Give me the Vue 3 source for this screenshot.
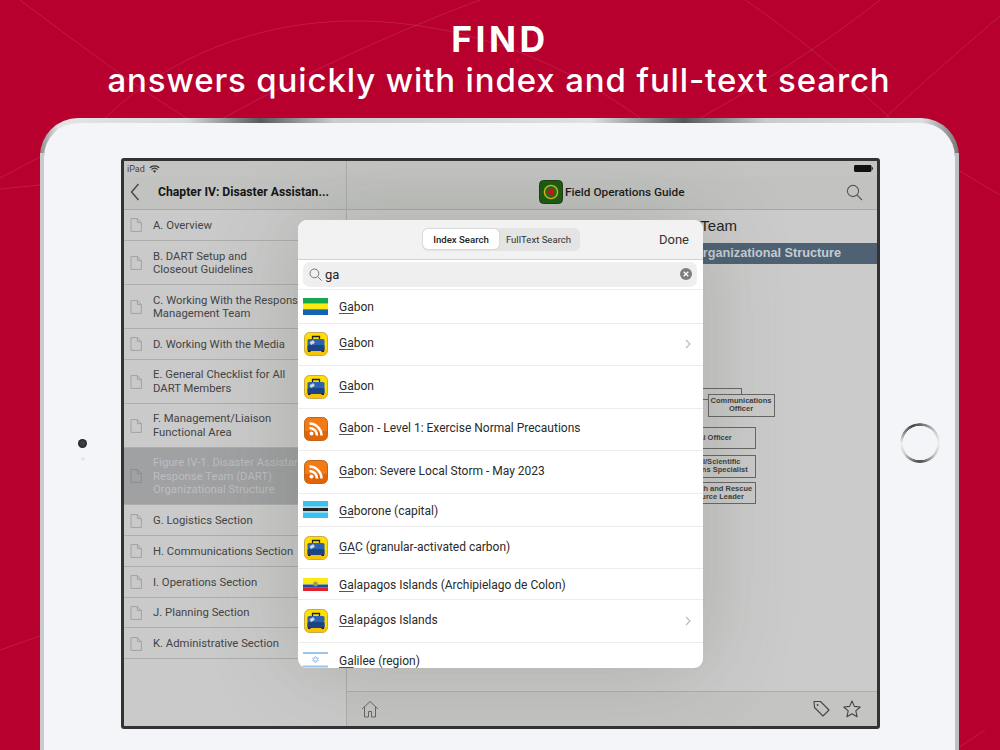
<template>
  <div class="page">
    <svg class="bg-lines" width="1000" height="750" viewBox="0 0 1000 750" fill="none">
      <path d="M20 0C80 45 140 90 190 120" />
      <path d="M105 118C170 55 260 22 350 21C460 20 560 60 640 118" />
      <path d="M480 0C400 30 310 70 220 120" />
      <path d="M0 178L40 157" />
      <path d="M0 189L40 185" />
      <path d="M745 0C790 30 850 80 890 118" />
      <path d="M880 0C830 40 760 85 700 118" />
      <path d="M1000 16C960 50 920 85 885 118" />
      <path d="M958 170L1000 195" />
      <path d="M0 650L40 636" />
      <path d="M958 748L985 730" />
    </svg>

    <header class="headline">
      <h1>FIND</h1>
      <p>answers quickly with index and full-text search</p>
    </header>

    <div class="ipad">
      <div class="ipad-inner">
        <div class="bezel-left">
          <span class="camera"></span>
          <span class="sensor"></span>
        </div>

        <div class="screen">
          <aside class="side-col">
            <div class="statusbar">
              <span>iPad</span>
              <svg width="11" height="8" viewBox="0 0 11 8" fill="none" stroke="#333" stroke-width="1.2">
                <path d="M.8 2.8a6.8 6.8 0 0 1 9.4 0M2.5 4.6a4.4 4.4 0 0 1 6 0" />
                <path d="M5.5 7.8 3.9 6a2.3 2.3 0 0 1 3.2 0z" fill="#333" stroke="none" />
              </svg>
            </div>
            <div class="navbar side-nav">
              <svg width="10" height="18" viewBox="0 0 10 18" fill="none" stroke="#444" stroke-width="1.4">
                <path d="M8.5 1 1.5 9l7 8" />
              </svg>
              <span class="chapter-title">Chapter IV: Disaster Assistan...</span>
            </div>
            <ul class="chapters">
              <li v-for="item in chapters" :key="item.lines[0]"
                  :class="['chapter', 'lines-' + item.lines.length, { current: item.current }]">
                <svg class="doc-icon" width="12" height="14" viewBox="0 0 12 14" fill="none">
                  <path d="M1 .6h6.4L11.4 4.6v8.8H1zM7.4.6v4h4" />
                </svg>
                <div class="chapter-text">
                  <div v-for="line in item.lines" :key="line">{{ line }}</div>
                </div>
              </li>
            </ul>
          </aside>

          <section class="main-col">
            <div class="statusbar status-right">
              <svg width="19" height="7" viewBox="0 0 19 7">
                <rect x="0" y="0" width="17.5" height="7" rx="1.4" fill="#111" />
                <rect x="17.8" y="2.3" width="1.2" height="2.4" fill="#333" />
              </svg>
            </div>
            <div class="navbar main-nav">
              <span class="app-badge">
                <svg width="24" height="24" viewBox="0 0 24 24">
                  <rect x=".5" y=".5" width="23" height="23" rx="4" fill="#1d5a10" stroke="#1c3d12" />
                  <circle cx="12" cy="12" r="6.6" fill="#2a6a16" stroke="#c6c21c" stroke-width="1.4" />
                  <path d="M6.8 12 15 7.6v8.8z" fill="#cf1020" />
                </svg>
              </span>
              <span class="app-title">Field Operations Guide</span>
              <svg class="main-search" width="17" height="17" viewBox="0 0 17 17" fill="none" stroke="#555" stroke-width="1.1">
                <circle cx="7" cy="7" r="5.6" />
                <path d="m11 11 5 5" />
              </svg>
            </div>

            <div class="doc">
              <div class="doc-title">Team</div>
              <div class="doc-bar">Organizational Structure</div>
              <div class="org">
                <div class="org-box box-back"></div>
                <div class="org-box box-comm">Communications<br />Officer</div>
                <div class="org-box box-medical">Medical Officer</div>
                <div class="org-box box-tech">Technical/Scientific<br />Operations Specialist</div>
                <div class="org-box box-search">Search and Rescue<br />Resource Leader</div>
              </div>
            </div>

            <div class="toolbar">
              <svg width="18" height="18" viewBox="0 0 18 18" fill="none" stroke="#666" stroke-width="1">
                <path d="M1 9 9 1.5 17 9M3.5 7v10h4v-5.500h3V17h4V7" />
              </svg>
              <span class="toolbar-gap"></span>
              <svg width="17" height="17" viewBox="0 0 17 17" fill="none" stroke="#444" stroke-width="1.1">
                <path d="M1 1.500h6.500l8.500 8.500-6 6-8.500-8.500z" stroke-linejoin="round" />
                <circle cx="4.600" cy="5" r=".9" fill="#444" stroke="none" />
              </svg>
              <svg width="18" height="18" viewBox="0 0 18 18" fill="none" stroke="#444" stroke-width="1.1">
                <path d="m9 1 2.400 5.400 5.800.6-4.400 3.900 1.300 5.800L9 13.700l-5.100 3 1.300-5.800L.8 7l5.800-.6z" stroke-linejoin="round" />
              </svg>
            </div>
          </section>

          <div class="search-modal">
            <div class="modal-head">
              <div class="segmented">
                <span class="seg active">Index Search</span>
                <span class="seg">FullText Search</span>
              </div>
              <span class="done">Done</span>
            </div>

            <div class="search-zone">
              <div class="search-field">
                <svg width="13" height="13" viewBox="0 0 13 13" fill="none" stroke="#777" stroke-width="1">
                  <circle cx="5.400" cy="5.400" r="4.400" />
                  <path d="m8.600 8.600 4 4" />
                </svg>
                <span class="query">ga</span>
                <span class="clear">
                  <svg width="6" height="6" viewBox="0 0 6 6" stroke="#fff" stroke-width="1.300">
                    <path d="m.7.7 4.600 4.600M5.300.7.700 5.300" />
                  </svg>
                </span>
              </div>
            </div>

            <ul class="results">
              <li v-for="(row, i) in results" :key="i" :class="['result', row.size]">
                <svg v-if="row.icon === 'gabon'" class="flag" width="25" height="17" viewBox="0 0 25 17">
                  <rect width="25" height="5.700" fill="#16a84a" />
                  <rect y="5.700" width="25" height="5.700" fill="#fcea10" />
                  <rect y="11.300" width="25" height="5.700" fill="#1464b0" />
                </svg>
                <svg v-else-if="row.icon === 'botswana'" class="flag" width="25" height="17" viewBox="0 0 25 17">
                  <rect width="25" height="17" fill="#3cc0ee" />
                  <rect y="5.600" width="25" height="5.800" fill="#fff" />
                  <rect y="6.800" width="25" height="3.400" fill="#222" />
                </svg>
                <svg v-else-if="row.icon === 'ecuador'" class="flag" width="25" height="13" viewBox="0 0 25 13">
                  <rect width="25" height="6.500" fill="#fde910" />
                  <rect y="6.500" width="25" height="3.200" fill="#1a4fa8" />
                  <rect y="9.700" width="25" height="3.300" fill="#e0202c" />
                  <circle cx="12.500" cy="6" r="2.400" fill="#a89a50" />
                </svg>
                <svg v-else-if="row.icon === 'israel'" class="flag" width="25" height="17" viewBox="0 0 25 17">
                  <rect width="25" height="17" fill="#fff" />
                  <rect width="25" height="2" y="0" fill="#9cc3ea" />
                  <rect width="25" height="2" y="13.500" fill="#9cc3ea" />
                  <path d="m12.500 4 3 5h-6zM12.500 11l3-5h-6z" fill="none" stroke="#9cc3ea" stroke-width=".8" />
                </svg>
                <svg v-else-if="row.icon === 'case'" class="app-icon" width="24" height="24" viewBox="0 0 24 24">
                  <rect x=".5" y=".5" width="23" height="23" rx="5" fill="#ffdf00" stroke="#c8a84e" />
                  <path d="M1 18h22v1a4 4 0 0 1-4 4H5a4 4 0 0 1-4-4z" fill="#f6c400" />
                  <path d="M8.500 7V4.500h7V7" fill="none" stroke="#222" stroke-width="1.300" />
                  <rect x="3.500" y="7" width="17" height="12" rx="1.500" fill="#2c62b0" />
                  <rect x="3.500" y="13" width="17" height="6" rx="1.500" fill="#1c4384" />
                  <rect x="4" y="18.500" width="2.500" height="1.500" fill="#222" />
                  <rect x="17.500" y="18.500" width="2.500" height="1.500" fill="#222" />
                  <rect x="6" y="9" width="4.500" height="3.200" rx=".5" fill="#d5d5d8" transform="rotate(-30 8.200 10.600)" />
                </svg>
                <svg v-else class="app-icon" width="24" height="24" viewBox="0 0 24 24">
                  <rect x=".5" y=".5" width="23" height="23" rx="5" fill="#f47a14" stroke="#b9661e" />
                  <path d="M1 14h22v5a4 4 0 0 1-4 4H5a4 4 0 0 1-4-4z" fill="#e26408" />
                  <circle cx="7.500" cy="16.500" r="2" fill="#fff" />
                  <path d="M5.500 11a7.500 7.500 0 0 1 7.500 7.500M5.500 6.500a12 12 0 0 1 12 12" fill="none" stroke="#fff" stroke-width="2.500" />
                </svg>
                <span class="result-text"><span class="match">{{ row.match }}</span>{{ row.rest }}</span>
                <svg v-if="row.more" class="chevron" width="6" height="10" viewBox="0 0 6 10" fill="none" stroke="#bbb" stroke-width="1.200">
                  <path d="m1 1 4 4-4 4" />
                </svg>
              </li>
            </ul>
          </div>
        </div>

        <div class="bezel-right">
          <span class="home-ring"></span>
        </div>
      </div>
    </div>
  </div>
</template>

<script setup>
const chapters = [
  { lines: ['A. Overview'] },
  { lines: ['B. DART Setup and', 'Closeout Guidelines'] },
  { lines: ['C. Working With the Response', 'Management Team'] },
  { lines: ['D. Working With the Media'] },
  { lines: ['E. General Checklist for All', 'DART Members'] },
  { lines: ['F. Management/Liaison', 'Functional Area'] },
  { lines: ['Figure IV-1. Disaster Assistance', 'Response Team (DART)', 'Organizational Structure'], current: true },
  { lines: ['G. Logistics Section'] },
  { lines: ['H. Communications Section'] },
  { lines: ['I. Operations Section'] },
  { lines: ['J. Planning Section'] },
  { lines: ['K. Administrative Section'] }
]

const results = [
  { icon: 'gabon', size: 'flag-row first', match: 'Ga', rest: 'bon' },
  { icon: 'case', size: 'icon-row', match: 'Ga', rest: 'bon', more: true },
  { icon: 'case', size: 'icon-row', match: 'Ga', rest: 'bon' },
  { icon: 'rss', size: 'icon-row', match: 'Ga', rest: 'bon - Level 1: Exercise Normal Precautions' },
  { icon: 'rss', size: 'icon-row', match: 'Ga', rest: 'bon: Severe Local Storm - May 2023' },
  { icon: 'botswana', size: 'flag-row tall', match: 'Ga', rest: 'borone (capital)' },
  { icon: 'case', size: 'icon-row', match: 'GA', rest: 'C (granular-activated carbon)' },
  { icon: 'ecuador', size: 'flag-row short', match: 'Ga', rest: 'lapagos Islands (Archipielago de Colon)' },
  { icon: 'case', size: 'icon-row', match: 'Ga', rest: 'lapágos Islands', more: true },
  { icon: 'israel', size: 'flag-row last', match: 'Ga', rest: 'lilee (region)' }
]
</script>

<style>
html, body {
  margin: 0;
  background: #b7002e;
}
</style>

<style scoped>
.page {
  position: relative;
  height: 750px;
  overflow: hidden;
  background: #b7002e;
  font-family: Roboto, "Liberation Sans", sans-serif;
}

.bg-lines {
  position: absolute;
  left: 0;
  top: 0;
}

.bg-lines path {
  stroke: rgba(255, 255, 255, 0.11);
  stroke-width: 1;
}

.headline {
  position: relative;
  height: 99px;
  padding: 19px 2px 0 0;
  text-align: center;
  color: #fff;
  font-family: Inter, "Open Sans", sans-serif;
}

.headline h1 {
  margin: 0;
  padding-left: 2px;
  font-size: 35.500px;
  line-height: 41px;
  font-weight: 700;
  letter-spacing: 3.500px;
}

.headline p {
  margin: 0;
  font-size: 33px;
  line-height: 40px;
  font-weight: 500;
  letter-spacing: 0.870px;
}

.ipad {
  position: relative;
  box-sizing: border-box;
  width: 919px;
  height: 680px;
  margin-left: 40px;
  padding: 4.500px 4.500px 0 4px;
  border-radius: 38px 38px 0 0;
  background: linear-gradient(90deg, #8d8d8d 0, #e4e4e4 2%, #d6d8da 16%, #5a5a5a 24%, #c9cbcd 32%, #dfe0e2 60%, #555 70%, #c9cbcd 79%, #dedfe1 96%, #777 100%);
}

.ipad::after {
  content: "";
  position: absolute;
  left: 0;
  right: 0;
  top: 35px;
  bottom: 0;
  border-left: 4px solid #c9cacc;
  border-right: 4.500px solid #bfc0c2;
  pointer-events: none;
}

.ipad-inner {
  display: flex;
  height: 100%;
  padding-top: 35px;
  box-sizing: border-box;
  border-radius: 34px 34px 0 0;
  background: #f3f5f8;
}

.bezel-left {
  flex: none;
  width: 77px;
  height: 571px;
  display: flex;
  flex-direction: column;
  align-items: center;
  justify-content: center;
  padding-top: 14px;
  box-sizing: border-box;
  gap: 9px;
}

.camera {
  width: 9px;
  height: 9px;
  border-radius: 50%;
  background: radial-gradient(circle, #38404c 30%, #222 70%);
}

.sensor {
  width: 4px;
  height: 4px;
  border-radius: 50%;
  background: #e6e7ea;
}

.bezel-right {
  flex: none;
  width: 74px;
  height: 571px;
  display: flex;
  align-items: center;
  padding-left: 20px;
  box-sizing: border-box;
}

.home-ring {
  display: block;
  width: 40px;
  height: 40px;
  border-radius: 50%;
  background: conic-gradient(#666 0deg, #c8c8c8 50deg, #f0f0f0 90deg, #c8c8c8 130deg, #555 175deg, #555 190deg, #d0d0d0 235deg, #f0f0f0 270deg, #888 305deg, #444 335deg, #666 360deg);
  -webkit-mask: radial-gradient(circle, transparent 17px, #000 17.500px);
  mask: radial-gradient(circle, transparent 17px, #000 17.500px);
}

.screen {
  position: relative;
  display: flex;
  flex: none;
  width: 759px;
  height: 571px;
  box-sizing: border-box;
  border: 3px solid #333;
  border-radius: 3px;
  background: #cbcbcb;
  overflow: hidden;
}

.side-col {
  width: 222px;
  flex: none;
  border-right: 1px solid #adaeac;
  background: #cacaca;
}

.main-col {
  flex: 1;
  min-width: 0;
  display: flex;
  flex-direction: column;
}

.statusbar {
  height: 16px;
  display: flex;
  align-items: center;
  gap: 4px;
  padding: 0 3px;
  background: #c4c5c3;
  color: #444;
  font-size: 9px;
}

.status-right {
  justify-content: flex-end;
  padding-right: 4px;
}

.navbar {
  box-sizing: border-box;
  height: 33.500px;
  padding-bottom: 2px;
  display: flex;
  align-items: center;
  border-bottom: 1px solid #a9aaa8;
  background: #c2c3c1;
}

.side-nav {
  padding-left: 6px;
}

.chapter-title {
  margin-left: 18px;
  font-size: 12.200px;
  font-weight: 700;
  color: #151515;
  white-space: nowrap;
}

.main-nav {
  position: relative;
  justify-content: flex-start;
  padding-left: 192px;
}

.app-badge {
  display: flex;
  margin-right: 2px;
}

.app-title {
  font-size: 11.800px;
  font-weight: 500;
  color: #1a1a1a;
}

.main-search {
  position: absolute;
  right: 14px;
  top: 7px;
}

.chapters {
  list-style: none;
  margin: 0;
  padding: 0;
}

.chapter {
  display: flex;
  align-items: center;
  box-sizing: border-box;
  padding: 1px 0 0 6px;
  border-bottom: 1px solid #adaeac;
  color: #444;
  font-size: 11.300px;
  line-height: 13.300px;
  white-space: nowrap;
}

.lines-1 {
  height: 30.800px;
}

.lines-2 {
  height: 44px;
}

.lines-3 {
  height: 57.600px;
}

.chapter.current {
  background: #a0a1a3;
  color: #bcbdbf;
}

.doc-icon {
  flex: none;
  margin-right: 11px;
  stroke: #a2a2a2;
}

.current .doc-icon {
  stroke: #8c8c8e;
}

.doc {
  position: relative;
  flex: 1;
  display: flex;
  flex-direction: column;
  min-height: 0;
}

.doc-title {
  height: 33px;
  line-height: 32px;
  padding-right: 140px;
  text-align: right;
  font-family: "Liberation Sans", sans-serif;
  font-size: 15px;
  color: #1f1f1f;
  white-space: nowrap;
}

.doc-bar {
  height: 20.500px;
  line-height: 20.500px;
  padding-right: 36px;
  text-align: right;
  background: #4e6274;
  color: #c6ccd2;
  font-family: "Liberation Sans", sans-serif;
  font-size: 12.700px;
  font-weight: 700;
  white-space: nowrap;
}

.org {
  position: relative;
  flex: 1;
  font-family: "Liberation Sans", sans-serif;
  font-size: 7.500px;
  font-weight: 700;
  line-height: 8.500px;
  color: #3c3c3c;
}

.org-box {
  position: absolute;
  box-sizing: border-box;
  left: 313px;
  width: 95.500px;
  border: 1px solid #666;
  white-space: nowrap;
}

.box-back {
  top: 124px;
  width: 82px;
  height: 12px;
}

.box-comm {
  left: 360.500px;
  top: 130px;
  width: 67px;
  height: 23.500px;
  padding-top: 2px;
  text-align: center;
  background: #cacaca;
}

.box-medical {
  top: 163px;
  height: 22.500px;
  padding: 6px 0 0 17px;
}

.box-tech {
  top: 191px;
  height: 23px;
  padding: 2px 0 0 10px;
}

.box-search {
  top: 218px;
  height: 22.500px;
  padding: 2px 0 0 22px;
}

.toolbar {
  height: 34px;
  display: flex;
  align-items: center;
  gap: 13px;
  padding: 0 16px 0 14px;
  border-top: 1px solid #aeafad;
  background: #c4c5c3;
}

.toolbar-gap {
  flex: 1;
}

.search-modal {
  position: absolute;
  left: 174px;
  top: 59px;
  width: 405px;
  height: 448px;
  border-radius: 9px;
  overflow: hidden;
  background: #fff;
  box-shadow: 0 0 90px rgba(70, 80, 60, 0.24);
}

.modal-head {
  position: relative;
  height: 39px;
  display: flex;
  align-items: center;
  justify-content: center;
  border-bottom: 1px solid #d2d2d2;
  background: #f2f2f2;
}

.segmented {
  display: flex;
  box-sizing: border-box;
  width: 158px;
  height: 23px;
  padding: 1.500px;
  border-radius: 6px;
  background: #e4e4e4;
}

.seg {
  display: flex;
  align-items: center;
  justify-content: center;
  flex: 1;
  font-size: 9.600px;
  font-weight: 400;
  color: #333;
  white-space: nowrap;
}

.seg.active {
  flex: none;
  width: 76px;
  border-radius: 5px;
  background: #fff;
  box-shadow: 0 0 2px rgba(0, 0, 0, 0.15);
  font-weight: 500;
  color: #222;
}

.done {
  position: absolute;
  right: 14px;
  top: 12px;
  font-size: 13px;
  line-height: 15px;
  font-weight: 400;
  color: #333;
}

.search-zone {
  height: 30px;
  box-sizing: border-box;
  padding: 2px 6px 0 5px;
  border-bottom: 1px solid #eee;
}

.search-field {
  display: flex;
  align-items: center;
  height: 25px;
  padding: 0 5px 0 6px;
  border-radius: 7px;
  background: #efefef;
}

.query {
  flex: 1;
  margin-left: 3px;
  font-size: 13px;
  color: #222;
}

.clear {
  display: flex;
  align-items: center;
  justify-content: center;
  width: 12px;
  height: 12px;
  border-radius: 50%;
  background: #7d7d82;
}

.results {
  list-style: none;
  margin: 0;
  padding: 0;
}

.result {
  display: flex;
  align-items: center;
  box-sizing: border-box;
  padding-left: 5px;
  border-bottom: 1px solid #ececec;
  font-size: 12px;
  color: #2a2a2a;
  white-space: nowrap;
}

.icon-row {
  height: 42.600px;
}

.flag-row {
  height: 32px;
}

.flag-row.first {
  height: 34px;
}

.flag-row.tall {
  height: 33px;
}

.flag-row.short {
  height: 31px;
}

.flag-row.last {
  height: 34px;
  border-bottom: 0;
}

.flag {
  flex: none;
}

.app-icon {
  flex: none;
  margin: 0 .5px;
}

.result-text {
  margin-left: 11px;
}

.flag-row .result-text {
  margin-top: 2px;
}

.icon-row .result-text {
  margin-top: -2px;
}

.match {
  text-decoration: underline;
  text-decoration-color: #555;
  text-underline-offset: 2px;
}

.chevron {
  margin-left: auto;
  margin-right: 12px;
}
</style>
